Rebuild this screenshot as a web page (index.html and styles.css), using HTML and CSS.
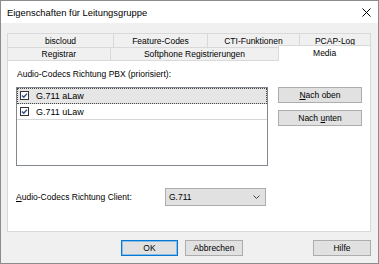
FILE: index.html
```html
<!DOCTYPE html>
<html lang="de">
<head>
    <meta charset="UTF-8">
    <title>Eigenschaften für Leitungsgruppe</title>
    <link rel="stylesheet" href="styles.css">
</head>
<body>
    <div class="window">
        <div class="titlebar">
            <span class="title">Eigenschaften für Leitungsgruppe</span>
            <svg class="close" width="9" height="9" viewBox="0 0 9 9">
                <path d="M0.5 0.5 L8.5 8.5 M8.5 0.5 L0.5 8.5" stroke="#000" stroke-width="1" fill="none"/>
            </svg>
        </div>

        <div class="client">
            <div class="tabs">
                <div class="tab-row">
                    <div class="tab" style="width: 107px">biscloud</div>
                    <div class="tab" style="width: 95px">Feature-Codes</div>
                    <div class="tab" style="width: 93px">CTI-Funktionen</div>
                    <div class="tab" style="width: 72px">PCAP-Log</div>
                </div>
                <div class="tab-row front">
                    <div class="tab" style="width: 104px">Registrar</div>
                    <div class="tab" style="width: 170px">Softphone Registrierungen</div>
                    <div class="tab active" style="width: 93px">Media</div>
                </div>
            </div>

            <div class="panel">
                <div class="label">Audio-Codecs Richtung PBX (priorisiert):</div>

                <div class="codec-area">
                    <div class="listbox">
                        <div class="item selected">
                            <svg class="check" width="9" height="9" viewBox="0 0 9 9">
                                <rect x="0.5" y="0.5" width="8" height="8" fill="#fff" stroke="#333"/>
                                <path d="M2 4.5 L3.8 6.3 L7 2.6" stroke="#2b4c86" stroke-width="1.4" fill="none"/>
                            </svg>
                            <span>G.711 aLaw</span>
                        </div>
                        <div class="item">
                            <svg class="check" width="9" height="9" viewBox="0 0 9 9">
                                <rect x="0.5" y="0.5" width="8" height="8" fill="#fff" stroke="#333"/>
                                <path d="M2 4.5 L3.8 6.3 L7 2.6" stroke="#2b4c86" stroke-width="1.4" fill="none"/>
                            </svg>
                            <span>G.711 uLaw</span>
                        </div>
                    </div>

                    <div class="side-buttons">
                        <button class="btn"><u>N</u>ach oben</button>
                        <button class="btn">Nach <u>u</u>nten</button>
                    </div>
                </div>

                <div class="client-row">
                    <span class="client-label"><u>A</u>udio-Codecs Richtung Client:</span>
                    <div class="combo">
                        <span>G.711</span>
                        <svg class="chevron" width="7" height="4" viewBox="0 0 7 4">
                            <path d="M0.5 0.5 L3.5 3.5 L6.5 0.5" stroke="#444" stroke-width="1" fill="none"/>
                        </svg>
                    </div>
                </div>
            </div>

            <div class="footer">
                <button class="btn default">OK</button>
                <button class="btn">Abbrechen</button>
                <button class="btn help">Hilfe</button>
            </div>
        </div>
    </div>
</body>
</html>
```

FILE: styles.css
```css
* {
    margin: 0;
    padding: 0;
    box-sizing: border-box;
}

body {
    background: #ffffff;
    font-family: "Liberation Sans", Arial, sans-serif;
    font-size: 8.5px;
    color: #000000;
}

.window {
    width: 379px;
    height: 264px;
    border: 1px solid #8c8c8c;
    background: #f0f0f0;
    display: flex;
    flex-direction: column;
}

.titlebar {
    height: 22px;
    background: #ffffff;
    display: flex;
    align-items: center;
    justify-content: space-between;
    padding: 0 7px 0 6px;
}

.title {
    font-size: 9.4px;
}

.client {
    flex: 1;
    padding: 10px 7px 0 6px;
    display: flex;
    flex-direction: column;
}

/* tabs */
.tab-row {
    display: flex;
    height: 14px;
}

.tab-row.front {
    height: 13px;
}

.tab {
    margin-left: -1px;
    border: 1px solid #d9d9d9;
    border-bottom: none;
    background: #f0f0f0;
    display: flex;
    align-items: center;
    justify-content: center;
}

.tab:first-child {
    margin-left: 0;
}

.tab.active {
    position: relative;
    z-index: 1;
    height: 16px;
    margin-top: -2px;
    background: #ffffff;
    align-items: flex-start;
    padding-top: 2px;
}

/* panel */
.panel {
    height: 172px;
    border: 1px solid #d9d9d9;
    background: #ffffff;
    padding: 7px 0 0 8px;
}

.label {
    height: 12px;
    line-height: 12px;
    padding-left: 1px;
}

.codec-area {
    display: flex;
    gap: 10px;
    margin-top: 7px;
}

.listbox {
    width: 252px;
    height: 79px;
    border: 1px solid #828790;
    background: #ffffff;
}

.item {
    height: 16px;
    border-bottom: 1px solid #d6d6d6;
    display: flex;
    align-items: center;
    padding-left: 3px;
    gap: 7px;
    font-size: 9px;
}

.item.selected {
    background: #e6e6e6;
    outline: 1px dotted #444;
    outline-offset: -1px;
}

.side-buttons {
    display: flex;
    flex-direction: column;
    gap: 7px;
}

.btn {
    height: 16px;
    background: #e1e1e1;
    border: 1px solid #adadad;
    font-family: inherit;
    font-size: 8.5px;
    color: #000000;
}

.side-buttons .btn {
    width: 84px;
}

.client-row {
    display: flex;
    align-items: center;
    margin-top: 22px;
}

.client-label {
    width: 149px;
}

.combo {
    width: 101px;
    height: 18px;
    background: #e1e1e1;
    border: 1px solid #adadad;
    display: flex;
    align-items: center;
    justify-content: space-between;
    padding: 0 5px 0 3px;
}

/* dialog buttons */
.footer {
    display: flex;
    gap: 7px;
    margin-top: 8px;
    padding-left: 114px;
}

.footer .btn {
    width: 58px;
}

.btn.default {
    width: 57px;
    border-color: #0078d7;
    box-shadow: inset 0 0 0 1px rgba(0, 120, 215, 0.35);
}

.btn.help {
    margin-left: auto;
}
```
